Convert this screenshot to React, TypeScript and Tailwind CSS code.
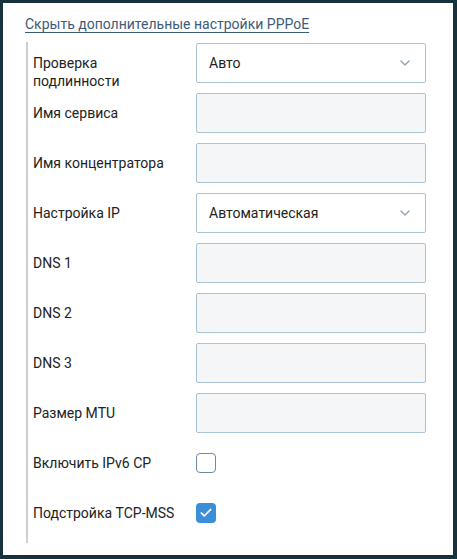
import { ChevronDown, Check } from "lucide-react";

type Row =
  | { label: string; kind: "select"; value: string }
  | { label: string; kind: "input" }
  | { label: string; kind: "checkbox"; checked: boolean };

const rows: Row[] = [
  { label: "Проверка подлинности", kind: "select", value: "Авто" },
  { label: "Имя сервиса", kind: "input" },
  { label: "Имя концентратора", kind: "input" },
  { label: "Настройка IP", kind: "select", value: "Автоматическая" },
  { label: "DNS 1", kind: "input" },
  { label: "DNS 2", kind: "input" },
  { label: "DNS 3", kind: "input" },
  { label: "Размер MTU", kind: "input" },
  { label: "Включить IPv6 CP", kind: "checkbox", checked: false },
  { label: "Подстройка TCP-MSS", kind: "checkbox", checked: true },
];

const Field = ({ row }: { row: Row }) => {
  if (row.kind === "select") {
    return (
      <div className="flex h-10 w-[230px] items-center justify-between rounded-[2px] border border-[#aac3d4] bg-white pl-3 pr-3">
        <span className="text-[14px] text-[#222]">{row.value}</span>
        <ChevronDown className="h-4 w-4 text-[#8ea3bb]" strokeWidth={2} />
      </div>
    );
  }
  if (row.kind === "input") {
    return <div className="h-10 w-[230px] rounded-[2px] border border-[#aac3d4] bg-[#f5f6f7]" />;
  }
  return (
    <div className="flex h-10 items-center">
      {row.checked ? (
        <div className="flex h-5 w-5 items-center justify-center rounded-[4px] bg-[#3b8fd8]">
          <Check className="h-3.5 w-3.5 text-white" strokeWidth={3} />
        </div>
      ) : (
        <div className="h-5 w-5 rounded-[4px] border border-[#6e8aa2] bg-white" />
      )}
    </div>
  );
};

const App = () => {
  return (
    <div
      className="h-[559px] w-[457px] border-t-[3px] border-r-[4px] border-b-[4px] border-l-[3px] border-[#16323c] bg-white"
      style={{ fontFamily: "Roboto, 'Noto Sans', sans-serif" }}
    >
      <div className="pl-[22px] pt-[12px] text-[14px] leading-[18px]">
        <a className="text-[#3d5b78] underline decoration-[#3d5b78] underline-offset-[3px]">
          Скрыть дополнительные настройки PPPoE
        </a>
      </div>
      <div className="ml-[23px] mt-[9px] flex flex-col gap-[10px] border-l-2 border-[#cfcfcf] pb-[10px] pl-[5px] pt-[1px]">
        {rows.map((row, i) => (
          <div key={i} className="flex h-10 items-start">
            <div
              className={
                row.kind === "checkbox"
                  ? "flex h-10 w-[163px] items-center text-[14px] leading-[18px] text-[#222]"
                  : "w-[163px] pr-[18px] pt-[11px] text-[14px] leading-[18px] text-[#222]"
              }
            >
              {row.label}
            </div>
            <Field row={row} />
          </div>
        ))}
      </div>
    </div>
  );
};

export default App;
